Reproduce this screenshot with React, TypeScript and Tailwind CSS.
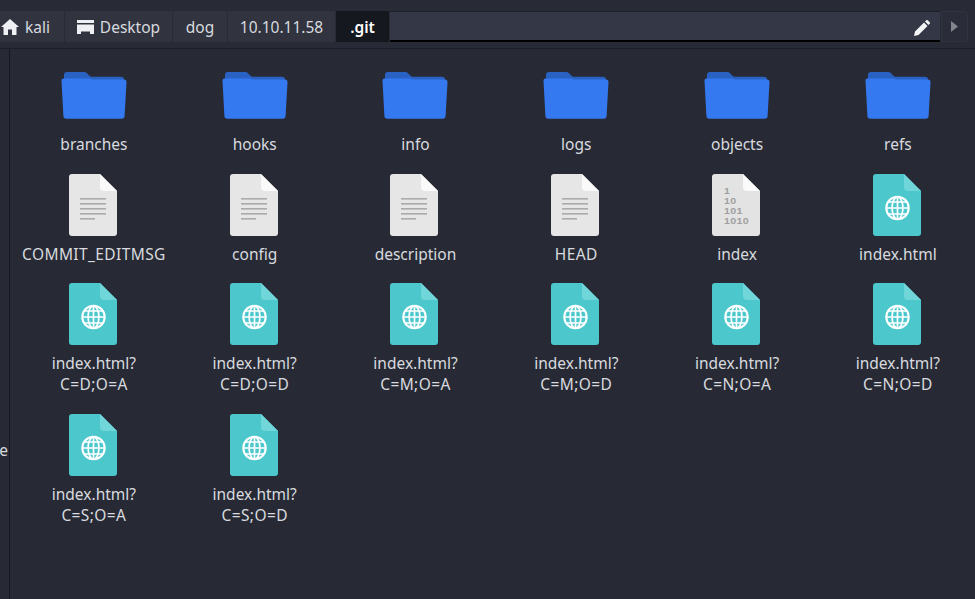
const F = '[font-family:"Noto_Sans",sans-serif]';

function Folder() {
  return (
    <svg width="66" height="49" viewBox="0 0 66 49">
      <path d="M3 4 a3 3 0 0 1 3-3 h17 a4 4 0 0 1 3 1.2 l2.5 2.6 a3 3 0 0 0 2.2.9 H60 a3 3 0 0 1 3 3 V20 H3 Z" fill="#2a62c4" />
      <path d="M2.5 7.5 H28 q1.5 0 2.5 1 H63 a2.5 2.5 0 0 1 2.5 2.6 L63.6 45 a3 3 0 0 1-3 2.8 H5.4 a3 3 0 0 1-3-2.8 L.5 9.6 a2 2 0 0 1 2-2.1 Z" fill="#3579f0" />
    </svg>
  );
}

function Sheet({ color, fold, children }: { color: string; fold: string; children?: React.ReactNode }) {
  return (
    <svg width="48" height="62" viewBox="0 0 48 62" className="-translate-x-px">
      <path d="M3 0 H31 L48 17 V59 a3 3 0 0 1-3 3 H3 a3 3 0 0 1-3-3 V3 a3 3 0 0 1 3-3 Z" fill={color} />
      <path d="M31 0 L48 17 H35 a4 4 0 0 1-4-4 Z" fill={fold} />
      {children}
    </svg>
  );
}

function TextFile() {
  return (
    <Sheet color="#e6e6e6" fold="#fafafa">
      <g fill="#ababab">
        <rect x="11" y="24" width="26" height="1.6" />
        <rect x="11" y="29" width="26" height="1.6" />
        <rect x="11" y="34" width="26" height="1.6" />
        <rect x="11" y="39" width="26" height="1.6" />
        <rect x="11" y="44" width="15" height="1.6" />
      </g>
    </Sheet>
  );
}

function BinaryFile() {
  return (
    <Sheet color="#e3e3e3" fold="#fafafa">
      <g fill="#a0a0a0" fontFamily='"Liberation Sans",sans-serif' fontWeight="700" fontSize="8.2" letterSpacing="0.25" transform="scale(1.3 1)">
        <text x="9.2" y="20.5">1</text>
        <text x="9.2" y="30">10</text>
        <text x="9.2" y="40.3">101</text>
        <text x="9.2" y="49.8">1010</text>
      </g>
    </Sheet>
  );
}

function HtmlFile() {
  return (
    <Sheet color="#4cc8cd" fold="#70d6d9">
      <g fill="none" stroke="#ffffff" strokeWidth="1.7">
        <circle cx="24.5" cy="34" r="11.2" strokeWidth="2.1" />
        <ellipse cx="24.5" cy="34" rx="5.4" ry="11.2" />
        <path d="M24.5 23 V45 M13.3 34 H35.7 M15 28 H34 M15 40 H34" />
      </g>
    </Sheet>
  );
}

type Kind = "folder" | "text" | "binary" | "html";
const items: { name: string[]; kind: Kind }[] = [
  { name: ["branches"], kind: "folder" },
  { name: ["hooks"], kind: "folder" },
  { name: ["info"], kind: "folder" },
  { name: ["logs"], kind: "folder" },
  { name: ["objects"], kind: "folder" },
  { name: ["refs"], kind: "folder" },
  { name: ["COMMIT_EDITMSG"], kind: "text" },
  { name: ["config"], kind: "text" },
  { name: ["description"], kind: "text" },
  { name: ["HEAD"], kind: "text" },
  { name: ["index"], kind: "binary" },
  { name: ["index.html"], kind: "html" },
  { name: ["index.html?", "C=D;O=A"], kind: "html" },
  { name: ["index.html?", "C=D;O=D"], kind: "html" },
  { name: ["index.html?", "C=M;O=A"], kind: "html" },
  { name: ["index.html?", "C=M;O=D"], kind: "html" },
  { name: ["index.html?", "C=N;O=A"], kind: "html" },
  { name: ["index.html?", "C=N;O=D"], kind: "html" },
  { name: ["index.html?", "C=S;O=A"], kind: "html" },
  { name: ["index.html?", "C=S;O=D"], kind: "html" },
];

function Crumb({ w, active, children }: { w: string; active?: boolean; children: React.ReactNode }) {
  return (
    <div
      className={`${w} h-full flex items-center justify-center gap-[7px] pt-px ${
        active ? "bg-[#16181f] text-white font-semibold" : "bg-[#31343f] text-[#d8dadf]"
      }`}
    >
      {children}
    </div>
  );
}

export default function App() {
  return (
    <div className={`w-[975px] h-[599px] overflow-hidden bg-[#272a35] flex flex-col text-[15.5px] leading-[21px] text-[#d8dadf] ${F}`}>
      <div className="h-[49px] shrink-0 bg-[#282b36] border-b border-[#1d1f28] pt-[11px]">
        <div className="h-[31px] flex gap-px">
          <Crumb w="w-[64px] !justify-start pl-px">
            <svg width="18" height="16" viewBox="0 0 18 16" fill="#eef0f3">
              <path d="M9 0 L18 8 H15.5 V16 H11 V10.5 H7 V16 H2.5 V8 H0 Z" />
            </svg>
            <span className="ml-[-1px]">kali</span>
          </Crumb>
          <Crumb w="w-[107px]">
            <svg width="17" height="14" viewBox="0 0 17 14" fill="#eef0f3">
              <rect x="0" y="0" width="17" height="3" />
              <path d="M0 4.5 H17 V14 H13 V11.5 H4 V14 H0 Z" />
            </svg>
            <span className="-ml-px">Desktop</span>
          </Crumb>
          <Crumb w="w-[54px]">dog</Crumb>
          <Crumb w="w-[107px]">10.10.11.58</Crumb>
          <Crumb w="w-[53px]" active>.git</Crumb>
          <div className="w-[550px] h-full bg-[#343746] border-t border-[#1d1f28] border-b-2 border-b-black flex items-center justify-end pr-[10px] pt-[3px]">
            <svg width="16" height="16" viewBox="0 0 16 16" fill="#f4f5f7">
              <path d="M0 16 L1 11.5 L10 2.5 L13.5 6 L4.5 15 Z M11 1.5 L12.3 .3 a1 1 0 0 1 1.4 0 L15.7 2.3 a1 1 0 0 1 0 1.4 L14.5 5 Z" />
            </svg>
          </div>
          <div className="w-[27px] h-full bg-[#2a2d39] border border-[#31343f] rounded-r-[3px] flex items-center justify-center">
            <svg width="7" height="11" viewBox="0 0 7 11" fill="#82858e">
              <path d="M0 0 L7 5.5 L0 11 Z" />
            </svg>
          </div>
        </div>
      </div>
      <div className="flex-1 flex min-h-0">
        <div className="w-[10px] shrink-0 border-r border-[#15171d] overflow-hidden flex flex-col items-end pt-[391px] relative">
          <span className="text-[#d8dadf] mr-px">e</span>
        </div>
        <div className="flex-1 pt-[15px] pl-[3.5px]">
          <div className="grid grid-cols-[repeat(6,160.8px)] gap-y-[18.5px]">
            {items.map((it, i) => (
              <div key={i} className="flex flex-col items-center">
                <div className="h-[62px] flex items-center justify-center">
                  {it.kind === "folder" && <Folder />}
                  {it.kind === "text" && <TextFile />}
                  {it.kind === "binary" && <BinaryFile />}
                  {it.kind === "html" && <HtmlFile />}
                </div>
                <div className="mt-2 text-center whitespace-nowrap">
                  {it.name.map((l) => (
                    <div key={l} className={/[A-Z]/.test(l) ? "tracking-[0.4px]" : ""}>{l}</div>
                  ))}
                </div>
              </div>
            ))}
          </div>
        </div>
      </div>
    </div>
  );
}
